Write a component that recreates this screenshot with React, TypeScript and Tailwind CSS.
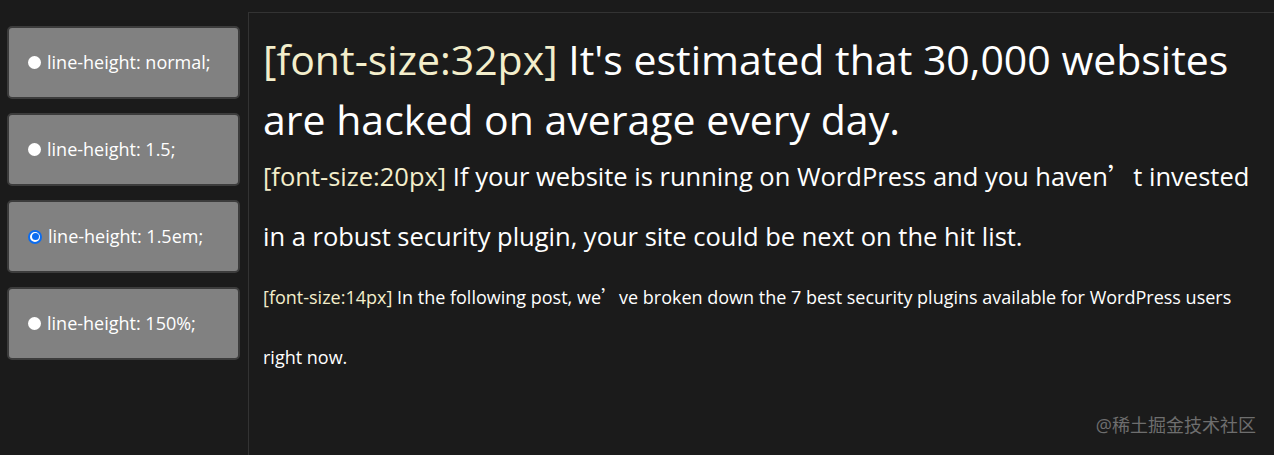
import React, { useState } from "react";

const options = [
  "line-height: normal;",
  "line-height: 1.5;",
  "line-height: 1.5em;",
  "line-height: 150%;",
];

function Radio({ checked }: { checked: boolean }) {
  if (checked) {
    return (
      <span className="flex h-[14px] w-[14px] shrink-0 items-center justify-center rounded-full border-2 border-[#0b6cf0] bg-white">
        <span className="h-[7px] w-[7px] rounded-full bg-[#0b6cf0]" />
      </span>
    );
  }
  return <span className="h-[13px] w-[13px] shrink-0 rounded-full bg-white" />;
}

// the curly quote falls back to a CJK font in the original, so it takes a full-width cell
function Q() {
  return <span style={{ fontFamily: '"Noto Sans CJK SC", sans-serif' }}>’</span>;
}

export default function App() {
  const [selected, setSelected] = useState(2);

  return (
    <div
      className="relative flex h-[455px] w-full overflow-hidden bg-[#1b1b1b] text-white"
      style={{ fontFamily: '"Open Sans", "Noto Sans CJK SC", sans-serif' }}
    >
      {/* sidebar */}
      <div className="flex w-[248px] shrink-0 flex-col gap-[14px] px-[7px] pt-[26px]">
        {options.map((opt, i) => (
          <button
            key={opt}
            onClick={() => setSelected(i)}
            className="flex h-[73px] w-[233px] items-center gap-[6px] rounded-[5px] border-2 border-[#3c3c3c] bg-[#818181] pl-[19px] text-left text-[18px] text-white"
          >
            <Radio checked={selected === i} />
            <span>{opt}</span>
          </button>
        ))}
      </div>

      {/* content */}
      <div className="mt-[12px] flex-1 border-l border-t border-[#333333] pl-[14px] pr-[14px] pt-[16px] leading-[60px]">
        <p className="text-[41px]">
          <span className="text-[#f3eecb]">[font-size:32px]</span> It's estimated that 30,000 websites are hacked on average every day.
        </p>
        <p className="-mt-[4px] text-[25.5px]">
          <span className="text-[#f3eecb]">[font-size:20px]</span> If your website is running on WordPress and you haven<Q />t invested in a robust security plugin, your site could be next on the hit list.
        </p>
        <p className="text-[18px]">
          <span className="text-[#f3eecb]">[font-size:14px]</span> In the following post, we<Q />ve broken down the 7 best security plugins available for WordPress users right now.
        </p>
      </div>

      <div className="absolute bottom-[16px] right-[18px] text-[18px] text-[#6e6e6e]">
        @稀土掘金技术社区
      </div>
    </div>
  );
}
